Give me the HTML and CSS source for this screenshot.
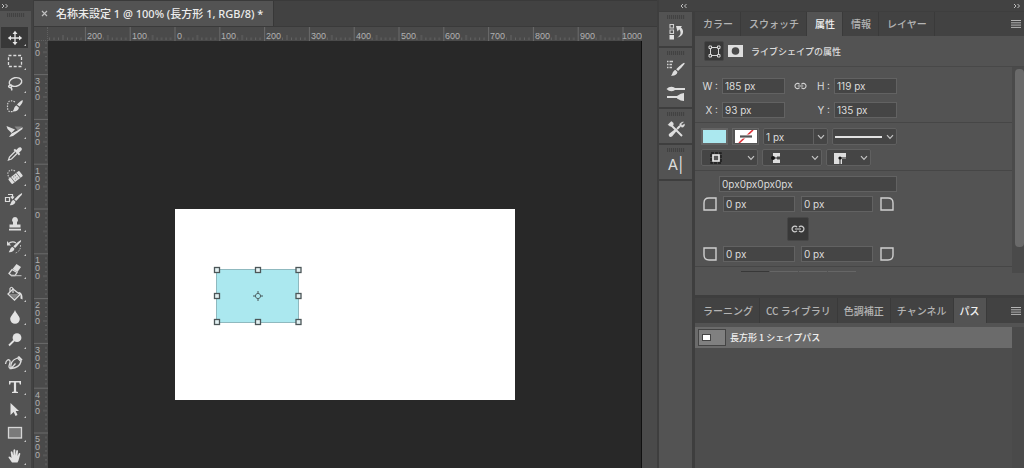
FILE: index.html
```html
<!DOCTYPE html>
<html lang="ja">
<head>
<meta charset="utf-8">
<title>名称未設定 1</title>
<link rel="stylesheet" href="styles.css">
</head>
<body>
<svg class="defs" aria-hidden="true">
  <symbol id="chev" viewBox="0 0 8 6"><path d="M1 1.2 4 4.4 7 1.2" fill="none" stroke="#c4c4c4" stroke-width="1.2"/></symbol>
  <symbol id="chain" viewBox="0 0 14 8"><g fill="none" stroke="#d0d0d0" stroke-width="1.2"><path d="M6 2.2A2.8 2.8 0 1 0 6 5.8M8 2.2A2.8 2.8 0 1 1 8 5.8M4 4H10"/></g></symbol>
  <symbol id="brush" viewBox="0 0 13 13"><path d="M12.6.4C13 .9 12 2.4 6.6 8L4.8 6.300C10.500 1.100 12.100 0 12.600.4ZM4.200 7 6 8.800C5.500 11.500 3 12.600 0 12.200 1.600 11.300 1.400 7.400 4.200 7Z" fill="#dedede"/></symbol>
  <symbol id="menu" viewBox="0 0 10 8"><path d="M0 .5H10M0 2.800H10M0 5.100H10M0 7.400H10" stroke="#b4b4b4"/></symbol>
  <symbol id="corner" viewBox="0 0 14 14"><path d="M1 13V6Q1 1 6 1H13V13Z" fill="none" stroke="#cfcfcf" stroke-width="1.400"/></symbol>
</svg>
<div class="app">
  <nav class="tools" aria-label="ツール">
    <div class="strip strip-left"><svg width="8" height="6" viewBox="0 0 8 6"><path d="M1 1 3 3 1 5M4.500 1 6.500 3 4.500 5" fill="none" stroke="#c0c0c0"/></svg></div>
    <div class="grip"></div>
    <div class="tool-list">
      <button class="tool on" aria-label="移動"><svg viewBox="0 0 30 22"><path d="M9 11H21M15 5V17" stroke="#e6e6e6" stroke-width="1.300"/><path d="M15 3.800 17.500 7H12.500ZM15 18.200 12.500 15H17.500ZM7.800 11 11 8.500V13.500ZM22.200 11 19 13.500V8.500Z" fill="#e6e6e6"/></svg></button>
      <button class="tool" aria-label="長方形選択"><svg viewBox="0 0 30 22"><rect x="8.500" y="5.500" width="13" height="11" fill="none" stroke="#dcdcdc" stroke-width="1.300" stroke-dasharray="3 1.800"/></svg></button>
      <button class="tool" aria-label="なげなわ"><svg viewBox="0 0 30 22"><g fill="none" stroke="#dcdcdc" stroke-width="1.400"><ellipse cx="15.500" cy="9" rx="6.300" ry="4.300" transform="rotate(-12 15.500 9)"/><path d="M11 12C8 12 8 14.500 10 14.500S12.500 12 11 12M10.500 14.500Q12.500 15.500 11.500 17.500"/></g></svg></button>
      <button class="tool" aria-label="クイック選択"><svg viewBox="0 0 30 22"><path d="M15 6C9 3 7.500 6 7.500 10S8 16.500 13 15.500" fill="none" stroke="#d0d0d0" stroke-width="1.200" stroke-dasharray="1.500 1.200"/><path d="M22.500 4C23.500 5.500 21.500 8.500 19.500 10.500L17 8.500C19 6.500 21 4.500 22.500 4ZM16.500 9.500 19 11.800C18.500 14.500 16 16 12 15.500 14.500 14.500 13.500 10.500 16.500 9.500Z" fill="#dedede"/></svg></button>
      <button class="tool" aria-label="スライス"><svg viewBox="0 0 30 22"><path d="M6.500 6 15 9.500 11.500 13 7.500 9Z" fill="#dcdcdc"/><path d="M14.500 6.500H22L18 10.500Z" fill="#858585"/><path d="M22.500 7V9L13 16 9 17 11.500 13.500 17.500 10.500Z" fill="#e0e0e0"/></svg></button>
      <button class="tool" aria-label="スポイト"><svg viewBox="0 0 30 22"><path d="M15 8.500 9.500 14 8.500 17 11.500 16 17 10.500" fill="none" stroke="#dcdcdc" stroke-width="1.300"/><path d="M13.500 7 15 5.800 16.200 7 18.500 4.700C20.500 3 23 5.500 21.300 7.500L19 9.800 20.200 11 19 12.500Z" fill="#dedede"/></svg></button>
      <button class="tool" aria-label="修復ブラシ"><svg viewBox="0 0 30 22"><path d="M15 5C10 2.500 7 6 8 9S9 12 10 12" fill="none" stroke="#c8c8c8" stroke-width="1.200" stroke-dasharray="1.400 1.200"/><g transform="rotate(-38 15.500 11.500)"><rect x="8.500" y="8.300" width="14" height="6.500" rx="1" fill="#dedede"/><path d="M12 8V15M19 8V15" stroke="#6a6a6a" stroke-width=".8"/><path d="M14 10H17M14 12.800H17" stroke="#777" stroke-dasharray="1 1"/></g></svg></button>
      <button class="tool" aria-label="ブラシ"><svg viewBox="0 0 30 22"><path d="M5.500 8.500H9.500V12.500H5.500ZM8 5.500H12.500V8.500M10.800 7.500 12.500 9.500 14 7.500" fill="none" stroke="#dcdcdc" stroke-width="1.200"/><use href="#brush" x="9.500" y="4" width="13" height="13"/></svg></button>
      <button class="tool" aria-label="スタンプ"><svg viewBox="0 0 30 22"><path d="M15 4A3 3 0 0 1 17 9.200V11.500H20.500V14.500H9.500V11.500H13V9.200A3 3 0 0 1 15 4ZM9 15.800H21V17.500H9Z" fill="#dedede"/></svg></button>
      <button class="tool" aria-label="ヒストリーブラシ"><svg viewBox="0 0 30 22"><path d="M8 8Q12 4.500 16 7" fill="none" stroke="#dcdcdc" stroke-width="1.200"/><path d="M7 5V9.500H11Z" fill="#dcdcdc"/><path d="M20.500 9Q21 15 15.500 17" fill="none" stroke="#c8c8c8" stroke-dasharray="1.500 1.300"/><use href="#brush" x="8.500" y="4" width="13" height="13"/></svg></button>
      <button class="tool" aria-label="消しゴム"><svg viewBox="0 0 30 22"><path d="M16.500 5 21 8 17.500 13 12.500 10Z" fill="#dedede"/><path d="M12 10.500 17 13.500 15 16.500H11.500L9 14.500Z" fill="none" stroke="#dcdcdc" stroke-width="1.300"/><path d="M11 16.700H21.500" stroke="#c4c4c4"/></svg></button>
      <button class="tool" aria-label="塗りつぶし"><svg viewBox="0 0 30 22"><path d="M13 6 20 11.500 14.500 17 8 11Z" fill="none" stroke="#dcdcdc" stroke-width="1.300"/><path d="M9.500 11H19L14.500 16Z" fill="#858585"/><path d="M10 9V5.500Q11.500 3 13 5.500V10" fill="none" stroke="#dcdcdc" stroke-width="1.200"/><path d="M18 9C21.500 9 22.800 11.500 22.500 16.500L20.500 15.500V12Z" fill="#e2e2e2"/></svg></button>
      <button class="tool" aria-label="ぼかし"><svg viewBox="0 0 30 22"><path d="M15 4C16.500 8 19.800 10 19.800 13A4.800 4.800 0 0 1 10.200 13C10.200 10 13.500 8 15 4Z" fill="#e2e2e2"/></svg></button>
      <button class="tool" aria-label="覆い焼き"><svg viewBox="0 0 30 22"><circle cx="17" cy="8.700" r="4.400" fill="#e2e2e2"/><path d="M14 11.500 9 16.500" stroke="#e2e2e2" stroke-width="1.800"/></svg></button>
      <button class="tool" aria-label="ペン"><svg viewBox="0 0 30 22"><g fill="none" stroke="#dcdcdc" stroke-width="1.300"><path d="M5.500 12C6 8 9 6.500 10 9S6.500 15.500 11 16.500M11 16.500C10 10.500 13 7.500 17.500 6L21 9.500C20 13.500 16.500 16 11 16.500L15.500 11.500"/></g><path d="M17.500 5 19 4 22.500 7.500 21.500 9Z" fill="#e2e2e2"/></svg></button>
      <button class="tool" aria-label="文字"><svg viewBox="0 0 30 22"><path d="M9 5H21V8.500H19.800L19.300 6.600H16.100V15.600L18 16V17H12V16L13.900 15.600V6.600H10.700L10.200 8.500H9Z" fill="#e2e2e2"/></svg></button>
      <button class="tool" aria-label="パス選択"><svg viewBox="0 0 30 22"><path d="M10.500 4 19 12H15.700L17.500 16 15.500 17 13.700 13 10.500 16Z" fill="#e2e2e2"/></svg></button>
      <button class="tool" aria-label="長方形"><svg viewBox="0 0 30 22"><rect x="8.500" y="5.500" width="13" height="10.500" fill="#7a7a7a" stroke="#d6d6d6" stroke-width="1.300"/></svg></button>
      <button class="tool" aria-label="手のひら"><svg viewBox="0 0 30 22"><path d="M12 17.500 8.500 12.500Q8.500 10.800 10.500 12L11.500 13 10.700 7Q11.500 5.500 12.500 7L13.300 10.500 13.500 5Q14.500 3.500 15.300 5V10.500L16.300 5.500Q17.500 4.500 18 6L17.500 11 19 8Q20.500 7.500 20.300 9L18.500 15.500 17.500 17.500Z" fill="#e2e2e2"/></svg></button>
    </div>
  </nav>

  <main class="document">
    <div class="doc-tabs">
      <div class="doc-tab"><button class="close" aria-label="閉じる"><svg width="7" height="7" viewBox="0 0 7 7"><path d="M1 1 6 6M6 1 1 6" stroke="#c0c0c0" stroke-width="1.200"/></svg></button><span>名称未設定 1 @ 100% (長方形 1, RGB/8) *</span></div>
    </div>
    <div class="work">
      <div class="ruler-corner"></div>
      <svg class="ruler ruler-h">
        <defs><pattern id="th" x="36.900" width="44.800" height="14" patternUnits="userSpaceOnUse"><path d="M.5 0V14" stroke="#6a6a6a"/><path d="M4.980 10.500V13M9.460 10.500V13M13.940 10.500V13M18.420 10.500V13M22.900 8V13M27.380 10.500V13M31.860 10.500V13M36.340 10.500V13M40.820 10.500V13" stroke="#6a6a6a" stroke-width=".8"/></pattern></defs>
        <rect width="100%" height="14" fill="url(#th)"/>
        <g class="nums"><text x="39" y="12">200</text><text x="84" y="12">100</text><text x="129" y="12">0</text><text x="173" y="12">100</text><text x="218" y="12">200</text><text x="263" y="12">300</text><text x="308" y="12">400</text><text x="353" y="12">500</text><text x="397" y="12">600</text><text x="442" y="12">700</text><text x="487" y="12">800</text><text x="532" y="12">900</text><text x="574" y="12">1000</text></g>
      </svg>
      <div class="scroll-gap"></div>
      <svg class="ruler ruler-v">
        <defs><pattern id="tv" y="33.100" width="14" height="44.800" patternUnits="userSpaceOnUse"><path d="M0 .5H14" stroke="#6a6a6a"/><path d="M11 4.980H13M11 9.460H13M11 13.940H13M11 18.420H13M9 22.900H13M11 27.380H13M11 31.860H13M11 36.340H13M11 40.820H13" stroke="#6a6a6a" stroke-width=".8"/></pattern></defs>
        <rect width="14" height="100%" fill="url(#tv)"/>
        <g class="nums">
          <text y="7"><tspan x="1">0</tspan><tspan x="1" dy="8">0</tspan></text>
          <text y="43"><tspan x="1">3</tspan><tspan x="1" dy="8">0</tspan><tspan x="1" dy="8">0</tspan></text>
          <text y="88"><tspan x="1">2</tspan><tspan x="1" dy="8">0</tspan><tspan x="1" dy="8">0</tspan></text>
          <text y="133"><tspan x="1">1</tspan><tspan x="1" dy="8">0</tspan><tspan x="1" dy="8">0</tspan></text>
          <text y="177"><tspan x="1">0</tspan></text>
          <text y="222"><tspan x="1">1</tspan><tspan x="1" dy="8">0</tspan><tspan x="1" dy="8">0</tspan></text>
          <text y="267"><tspan x="1">2</tspan><tspan x="1" dy="8">0</tspan><tspan x="1" dy="8">0</tspan></text>
          <text y="312"><tspan x="1">3</tspan><tspan x="1" dy="8">0</tspan><tspan x="1" dy="8">0</tspan></text>
          <text y="357"><tspan x="1">4</tspan><tspan x="1" dy="8">0</tspan><tspan x="1" dy="8">0</tspan></text>
          <text y="401"><tspan x="1">5</tspan><tspan x="1" dy="8">0</tspan><tspan x="1" dy="8">0</tspan></text>
        </g>
      </svg>
      <div class="canvas">
        <div class="artboard">
          <svg class="shape" width="91" height="62" viewBox="0 0 91 62">
            <rect x="4.500" y="4.500" width="82" height="53" fill="#abe8ef" stroke="#8fb9bf"/>
            <g fill="#e3f1f3" stroke="#4c5658" stroke-width="1.300"><rect x="2.500" y="2.500" width="5" height="5"/><rect x="43.500" y="2.500" width="5" height="5"/><rect x="84" y="2.500" width="5" height="5"/><rect x="2.500" y="28.500" width="5" height="5"/><rect x="84" y="28.500" width="5" height="5"/><rect x="2.500" y="54.500" width="5" height="5"/><rect x="43.500" y="54.500" width="5" height="5"/><rect x="84" y="54.500" width="5" height="5"/></g>
            <g stroke="#455456" fill="none"><circle cx="46" cy="31" r="2.600" stroke-width=".8"/><path d="M46 26V29M46 33V36M41 31H44M48 31H51"/></g>
          </svg>
        </div>
      </div>
      <div class="scroll-gap"></div>
    </div>
  </main>

  <aside class="dock">
    <div class="strip"><svg width="8" height="6" viewBox="0 0 8 6"><path d="M3 1 1 3 3 5M6.500 1 4.500 3 6.500 5" fill="none" stroke="#c0c0c0"/></svg></div>
    <div class="dock-group"><div class="grip"></div>
      <button class="dock-btn" aria-label="ヒストリー"><svg width="20" height="20" viewBox="0 0 20 20"><path d="M4 2.500H7.500V6H4ZM4 8H7.500V11.500H4Z" fill="none" stroke="#d0d0d0" stroke-width="1.100"/><path d="M3.500 13H8V17.500H3.500Z" fill="#e2e2e2"/><path d="M10 4H16L11.500 9.500ZM11 15.500C15.500 13.500 15.500 9 12.500 6.500L14.500 5C19 8.500 17.500 14.500 11 15.500Z" fill="#dedede"/></svg></button></div>
    <div class="dock-group"><div class="grip"></div>
      <button class="dock-btn" aria-label="ブラシプリセット"><svg width="20" height="20" viewBox="0 0 20 20"><path d="M1 3.500H7M1 6.500H6M1 9.500H6" stroke="#d0d0d0" stroke-width="1.500" stroke-dasharray="1.500 1 6"/><use href="#brush" x="4.500" y="4.500" width="15" height="14"/></svg></button>
      <button class="dock-btn" aria-label="ブラシ設定"><svg width="20" height="20" viewBox="0 0 20 20"><path d="M7 6H19M1 14H11" stroke="#dedede" stroke-width="1.900"/><path d="M.5 6Q4 2.500 8.500 4.500V7.500Q4 9.500 .5 6ZM11 13Q15 10 18 10V18Q15 18 11 15.500Z" fill="#dedede"/></svg></button></div>
    <div class="dock-group"><div class="grip"></div>
      <button class="dock-btn" aria-label="ツールプリセット"><svg width="20" height="20" viewBox="0 0 20 20"><path d="M5 6 16 17" stroke="#dedede" stroke-width="2"/><path d="M14 7 11 10" stroke="#dedede" stroke-width="2"/><path d="M10 9.500 11.500 11 6 17.500Q4 18.500 3 17T3.500 14.500Z" fill="#dedede"/><path d="M2 5.500A3.300 3.300 0 0 0 7 6.500 2.600 2.600 0 0 0 5 2.500M17.500 3 15 5 16 6.500 18.500 5C19 8 16 9 14.300 7.300S14.500 3 17.500 3Z" fill="#dedede" stroke="#dedede" stroke-width=".4"/></svg></button></div>
    <div class="dock-group"><div class="grip"></div>
      <button class="dock-btn type" aria-label="文字パネル">A|</button></div>
    <div class="dock-rest"></div>
  </aside>

  <aside class="panels">
    <div class="strip strip-right"><svg width="8" height="6" viewBox="0 0 8 6"><path d="M1 1 3 3 1 5M4.500 1 6.500 3 4.500 5" fill="none" stroke="#c0c0c0"/></svg></div>
    <div class="tabs"><button>カラー</button><button>スウォッチ</button><button class="active">属性</button><button>情報</button><button>レイヤー</button><button class="more" aria-label="メニュー"><svg width="10" height="8"><use href="#menu"/></svg></button></div>
    <section class="props">
      <header class="props-head">
        <button class="mode" aria-label="シェイプ"><svg width="13" height="13" viewBox="0 0 13 13"><g fill="#3a3a3a" stroke="#d6d6d6"><path d="M2.500 2.500H10.500V10.500H2.500Z"/><path d="M1 1H3.500V3.500H1ZM9.500 1H12V3.500H9.500ZM1 9.500H3.500V12H1ZM9.500 9.500H12V12H9.500Z"/></g></svg></button>
        <svg width="15" height="12" viewBox="0 0 15 12"><path d="M0 0H15V12H0Z" fill="#dedede"/><circle cx="7.500" cy="6" r="3.800" fill="#4a4a4a"/></svg>
        <span>ライブシェイプの属性</span>
      </header>
      <div class="props-scroll">
        <div class="props-body">
          <div class="group dims">
            <label for="w">W :</label><input id="w" value="185 px"><svg class="mid" width="13" height="8"><use href="#chain"/></svg><label for="h">H :</label><input id="h" value="119 px">
            <label for="x">X :</label><input id="x" value="93 px"><span></span><label for="y">Y :</label><input id="y" value="135 px">
          </div>
          <div class="group strokes">
            <div class="line">
              <button class="swatch fill" aria-label="塗り"></button>
              <button class="swatch none" aria-label="線"><svg width="22" height="13" viewBox="0 0 22 13"><path d="M0 0H22V13H0Z" fill="#fff"/><path d="M4 13 18 0" stroke="#de3037" stroke-width="1.600"/><path d="M5 4.500H17V8.500H5Z" fill="#fff"/><path d="M5 6.500H17" stroke="#555" stroke-width="2.200"/></svg></button>
              <div class="combo width"><input aria-label="線の幅" value="1 px"><button aria-label="線の幅を選択"><svg width="8" height="6"><use href="#chev"/></svg></button></div>
              <div class="pick style"><select aria-label="線の種類"><option></option></select><span class="stroke-line"></span><svg width="8" height="6"><use href="#chev"/></svg></div>
            </div>
            <div class="line">
              <div class="pick align"><select aria-label="線の整列"><option></option></select><svg width="12" height="12" viewBox="0 0 12 12"><path d="M1 1H11V11H1Z" fill="none" stroke="#1c1c1c" stroke-width="1.400" stroke-dasharray="3 1"/><path d="M3 3H9V9H3Z" fill="#555" stroke="#eee" stroke-width="1.600"/></svg><svg width="8" height="6"><use href="#chev"/></svg></div>
              <div class="pick cap"><select aria-label="線端"><option></option></select><svg width="12" height="12" viewBox="0 0 12 12"><path d="M4 1H11V4.500H8V7.500H11V11H4Z" fill="#dedede"/><path d="M4 6H8" stroke="#222"/><circle cx="4" cy="6" r="2" fill="#111"/></svg><svg width="8" height="6"><use href="#chev"/></svg></div>
              <div class="pick join"><select aria-label="角の形状"><option></option></select><svg width="12" height="12" viewBox="0 0 12 12"><path d="M0 1H12V7H8V12H0Z" fill="#dedede"/><path d="M12 6H6V12" fill="none" stroke="#222"/><circle cx="6" cy="6" r="1.600" fill="#111"/></svg><svg width="8" height="6"><use href="#chev"/></svg></div>
            </div>
          </div>
          <div class="group corners">
            <input class="all" aria-label="角の半径" value="0px0px0px0px">
            <svg width="14" height="14"><use href="#corner"/></svg><input aria-label="左上" value="0 px"><input aria-label="右上" value="0 px"><svg class="tr" width="14" height="14"><use href="#corner"/></svg>
            <button class="link" aria-label="半径をリンク"><svg width="14" height="8"><use href="#chain"/></svg></button>
            <svg class="bl" width="14" height="14"><use href="#corner"/></svg><input aria-label="左下" value="0 px"><input aria-label="右下" value="0 px"><svg class="br" width="14" height="14"><use href="#corner"/></svg>
          </div>
          <div class="peek"><i></i><i></i><i></i><i></i></div>
        </div>
        <div class="track"><div class="thumb"></div></div>
      </div>
    </section>
    <div class="tabs tabs-low"><button>ラーニング</button><button>CC ライブラリ</button><button>色調補正</button><button>チャンネル</button><button class="active">パス</button><button class="more" aria-label="メニュー"><svg width="10" height="8"><use href="#menu"/></svg></button></div>
    <section class="paths">
      <div class="path-list"><div class="path-row"><span class="thumbnail"><i></i></span><span>長方形 1 シェイプパス</span></div></div>
      <div class="track"></div>
    </section>
  </aside>
</div>
</body>
</html>
```
FILE: styles.css
```css
* { box-sizing: border-box; }
body {
  margin: 0;
  background: #424242;
  color: #dcdcdc;
  font: 10px/14px Inter, "Noto Sans CJK JP", sans-serif;
}
button, input, select { font: inherit; color: inherit; margin: 0; padding: 0; border: 0; border-radius: 0; background: none; }
svg { display: block; flex: none; }
.defs { position: absolute; width: 0; height: 0; }
.app { display: flex; min-height: 100vh; }

.strip { display: flex; align-items: center; justify-content: center; height: 11px; margin-bottom: 1px; background: #424242; }
.strip-left { justify-content: flex-start; padding-left: 1px; }
.strip-right { justify-content: flex-end; padding-right: 3px; }
.grip { width: 18px; height: 4px; margin: 0 auto; background: repeating-linear-gradient(90deg, #424242 0 1px, #505050 1px 2px); }

/* Tools */
.tools { display: flex; flex-direction: column; width: 31px; background: #535353; }
.tools .strip { margin-bottom: 2px; }
.tools .grip { margin-bottom: 9px; }
.tool-list { flex: 1; display: grid; grid-auto-rows: 1fr; }
.tool { position: relative; display: grid; place-items: center start; min-height: 22px; width: 30px; }
.tool svg { width: 30px; height: 22px; }
.tool::after { content: ""; position: absolute; right: 4px; bottom: 3px; border: 1px solid transparent; border-right-color: #c8c8c8; border-bottom-color: #c8c8c8; }
.tool.on { background: linear-gradient(#383838, #383838) 1px 1px / 27px 21px no-repeat; }

/* Document */
.document { flex: 1; min-width: 0; display: flex; flex-direction: column; margin-left: 2px; border-left: 1px solid #3c3c3c; }
.doc-tabs { display: flex; height: 27px; border-top: 1px solid #3a3a3a; border-bottom: 1px solid #3a3a3a; background: #424242; }
.doc-tab { display: flex; align-items: center; gap: 8px; padding: 0 10px 0 7px; border-right: 1px solid #383838; background: #535353; color: #ececec; font-family: "Noto Sans", "Noto Sans CJK JP", sans-serif; font-size: 11px; font-weight: 500; white-space: nowrap; }
.work { flex: 1; display: grid; grid-template: 14px 1fr / 14px 1fr 15px; background: #4a4a4a; }
.ruler { width: 100%; height: 100%; overflow: hidden; background: #4a4a4a; }
.ruler-v { height: 0; min-height: 100%; }
.ruler-corner { border-right: 1px dotted #606060; border-bottom: 1px dotted #606060; }
.nums { font: 9px "Liberation Sans", sans-serif; fill: #b0b0b0; }
.scroll-gap { background: #4a4a4a; }
.canvas { position: relative; overflow: hidden; background: #282828; border-right: 1px solid #101010; }
.artboard { position: absolute; left: 127px; top: 168px; width: 340px; height: 191px; background: #fff; }
.shape { position: absolute; left: 37px; top: 56px; }

/* Icon dock */
.dock { display: flex; flex-direction: column; width: 38px; padding: 0 3px 0 2px; background: #3e3e3e; }
.dock .strip { margin-right: -3px; padding-left: 14px; }
.dock-group { padding: 3px 0 2px; margin-bottom: 2px; background: #535353; }
.dock-btn { display: grid; place-items: center; width: 100%; height: 25px; }
.dock-btn.type { font-size: 15px; }
.dock-rest { flex: 1; background: #535353; }

/* Panels */
.panels { display: flex; flex-direction: column; width: 329px; background: #3e3e3e; }
.tabs { display: flex; height: 24px; background: #424242; color: #b4b4b4; }
.tabs button { padding: 0 7px 0 8px; border-right: 1px solid #3a3a3a; font-family: "Noto Sans CJK JP", sans-serif; font-weight: 500; white-space: nowrap; }
.tabs .active { background: #535353; color: #f0f0f0; }
.tabs .more { margin-left: auto; padding: 0 3px 0 8px; border: 0; }
.tabs-low { margin-top: 3px; height: 25px; }
.tabs-low button { padding: 0 6px; }
.tabs-low button:first-child { padding-left: 8px; }
.props { background: #535353; }
.props-head { display: flex; align-items: center; gap: 4px; height: 31px; padding-left: 9px; border-bottom: 1px solid #484848; font: 500 9px "Noto Sans CJK JP", sans-serif; }
.props-head span { padding-left: 4px; }
.mode, .link { display: grid; place-items: center; background: #383838; border: 1px solid #464646; border-radius: 2px; }
.mode { width: 20px; height: 20px; }
.props-scroll { display: flex; }
.props-body { flex: 1; height: 228px; overflow: hidden; }
.group { border-bottom: 1px solid #464646; }
input { min-width: 0; height: 16px; padding: 0 2px; background: #454545; border: 1px solid #626262; outline: 0; }
.dims { display: grid; grid-template-columns: 20px 63px 22px 15px 63px; column-gap: 4px; row-gap: 8px; align-items: center; padding: 11px 0 4px 3px; }
.dims label { text-align: right; white-space: nowrap; }
.mid { justify-self: center; }
.strokes { display: grid; gap: 4px; padding: 5px 0 4px 6px; }
.line { display: flex; gap: 4px; }
.swatch { display: grid; place-items: center; width: 27px; height: 17px; border: 1px solid #666; }
.fill { background: #abe8ef; border: 2px solid #646464; }
.combo, .pick { display: flex; align-items: center; height: 17px; background: #454545; border: 1px solid #606060; border-radius: 2px; }
.combo input { flex: 1; height: 15px; border: 0; background: none; }
.combo button { display: grid; place-items: center; width: 14px; height: 15px; border-left: 1px solid #606060; }
.width { width: 65px; }
.pick { position: relative; justify-content: space-between; padding: 0 2px; }
.pick select { position: absolute; inset: 0; width: 100%; appearance: none; }
.style { width: 65px; }
.stroke-line { flex: 1; height: 2px; margin-right: 4px; background: #e2e2e2; }
.align { width: 57px; padding-left: 8px; }
.cap { width: 60px; padding-left: 6px; }
.join { width: 45px; padding-left: 7px; }
.corners { display: grid; grid-template-columns: 14px 73px 73px 14px; column-gap: 5px; align-items: center; padding: 5px 0 4px 8px; }
.corners input { margin: 0 0 0 1px; }
.corners .all { grid-column: 1 / -1; width: 178px; margin: 0 0 4px 16px; }
.link { grid-column: 1 / -1; width: 22px; height: 24px; margin: 5px 0 5px 84px; }
.tr { transform: scaleX(-1); }
.bl { transform: scaleY(-1); }
.br { transform: scale(-1); }
.tr, .br { margin-left: 2px; }
.peek { display: flex; gap: 1px; padding: 4px 0 0 46px; }
.peek i { width: 28px; height: 1px; background: #666; }
.peek i:first-child { background: #383838; }
.track { width: 12px; padding: 2px 0 0 3px; background: #4a4a4a; }
.props .track { height: 206px; }
.thumb { height: 178px; border-radius: 4px; background: #6a6a6a; }
.paths { flex: 1; display: flex; padding-top: 4px; background: #535353; }
.path-list { flex: 1; background: #4d4d4d; }
.path-row { display: flex; align-items: center; gap: 4px; height: 21px; padding-left: 3px; background: #6b6b6b; color: #f0f0f0; font: 500 9px "Noto Sans CJK JP", sans-serif; }
.thumbnail { display: flex; align-items: center; width: 28px; height: 17px; padding-left: 3px; border: 1px solid #444; background: #808080; }
.thumbnail i { width: 7px; height: 5px; border: 1px solid #444; background: #fff; box-sizing: content-box; }
```
